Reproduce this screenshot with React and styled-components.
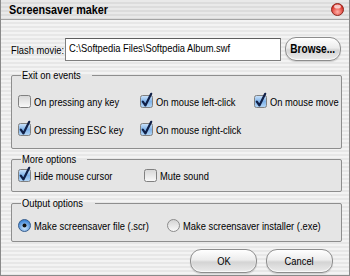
import React from "react";
import styled, { createGlobalStyle } from "styled-components";

const GlobalStyle = createGlobalStyle`
  body {
    margin: 0;
    font-family: "Liberation Sans", Arial, sans-serif;
    font-size: 11px;
    color: #000;
  }
`;

const Window = styled.div`
  width: 350px;
  height: 276px;
  box-sizing: border-box;
  border: 1px solid #8a8a8a;
  border-top: none;
  display: flex;
  flex-direction: column;
  background: repeating-linear-gradient(
    to bottom,
    #f3f3f3 0px,
    #f3f3f3 2px,
    #e7e7e7 2px,
    #e7e7e7 4px
  );
`;

// the dialog's font is a narrow one, squeeze Liberation Sans to match
const Txt = styled.span`
  display: inline-block;
  white-space: nowrap;
  transform: scaleX(${(p) => p.$sx || 0.85});
  transform-origin: ${(p) => (p.$center ? "center" : "left center")};
`;

const TitleBar = styled.div`
  height: 20px;
  box-sizing: border-box;
  border-bottom: 1px solid #a4a4a4;
  display: flex;
  align-items: center;
  justify-content: space-between;
  padding: 0 5px 0 8px;
  font-weight: bold;
  font-size: 12px;
  background: repeating-linear-gradient(
    to bottom,
    #e9e9e9 0px,
    #e9e9e9 2px,
    #dcdcdc 2px,
    #dcdcdc 4px
  );
`;

const Body = styled.div`
  padding: 17px 8px 0 9px;
  display: flex;
  flex-direction: column;
`;

const FlashRow = styled.div`
  display: flex;
  align-items: center;
  height: 24px;
`;

const Label = styled.span`
  width: 54px;
  padding: 2px 0 0 1px;
`;

const PathInput = styled.div`
  width: 218px;
  height: 23px;
  box-sizing: border-box;
  border: 1px solid #7f7f7f;
  border-top-color: #5e5e5e;
  background: #fff;
  padding: 3px 3px 0;
  overflow: hidden;
`;

const PillButton = styled.button`
  font-family: inherit;
  font-size: ${(p) => (p.$bold ? "12px" : "11px")};
  font-weight: ${(p) => (p.$bold ? "bold" : "normal")};
  width: ${(p) => p.$w}px;
  height: 24px;
  border: 1px solid #8d8d8d;
  border-radius: 11px;
  background: linear-gradient(to bottom, #ffffff 0%, #ececec 45%, #d4d4d4 55%, #ebebeb 100%);
  box-shadow: inset 0 -1px 1px rgba(255, 255, 255, 0.8), 0 1px 1px rgba(0, 0, 0, 0.15);
  padding: 0;
  color: #000;
  display: flex;
  align-items: center;
  justify-content: center;
  margin-left: ${(p) => p.$ml || 0}px;
`;

const Group = styled.fieldset`
  margin: ${(p) => p.$top}px 0 0 1px;
  width: 331px;
  box-sizing: border-box;
  border: 1px solid #8e8e8e;
  border-radius: 2px;
  background: #e5e5e5;
  padding: ${(p) => p.$pad};
  min-width: 0;
`;

const Legend = styled.legend`
  padding: 0 1px;
  margin-left: 3px;
  line-height: 13px;
`;

const OptionGrid = styled.div`
  display: grid;
  grid-template-columns: ${(p) => p.$cols};
  row-gap: ${(p) => p.$gap || 0}px;
`;

const Option = styled.div`
  display: flex;
  align-items: center;
  gap: 3px;
  height: 15px;
  white-space: nowrap;
`;

const Footer = styled.div`
  display: flex;
  justify-content: flex-end;
  gap: 9px;
  padding: ${(p) => p.$top}px 8px 0 0;
`;

const CheckBox = ({ on }) => (
  <svg width="13" height="13" viewBox="0 0 13 13" style={{ overflow: "visible", flex: "none" }}>
    <defs>
      <linearGradient id="cbOn" x1="0" y1="0" x2="0" y2="1">
        <stop offset="0" stopColor="#cfe4fa" />
        <stop offset="0.5" stopColor="#7fb3ea" />
        <stop offset="1" stopColor="#b7d8f7" />
      </linearGradient>
      <linearGradient id="cbOff" x1="0" y1="0" x2="0" y2="1">
        <stop offset="0" stopColor="#d6d6d6" />
        <stop offset="1" stopColor="#fafafa" />
      </linearGradient>
    </defs>
    <rect x="0.5" y="0.5" width="12" height="12" rx="2" fill={on ? "url(#cbOn)" : "url(#cbOff)"} stroke="#808080" />
    {on && (
      <path d="M2.8 6.6 L5.4 10.4 L11.2 -1.2" fill="none" stroke="#102048" strokeWidth="2.2" strokeLinecap="round" strokeLinejoin="round" />
    )}
  </svg>
);

const Radio = ({ on }) => (
  <svg width="13" height="13" viewBox="0 0 13 13" style={{ flex: "none" }}>
    <defs>
      <radialGradient id="rdOn" cx="0.5" cy="0.7" r="0.6">
        <stop offset="0" stopColor="#cfe6fb" />
        <stop offset="1" stopColor="#3f86d8" />
      </radialGradient>
      <linearGradient id="rdOff" x1="0" y1="0" x2="0" y2="1">
        <stop offset="0" stopColor="#d2d2d2" />
        <stop offset="1" stopColor="#fbfbfb" />
      </linearGradient>
    </defs>
    <circle cx="6.5" cy="6.5" r="6" fill={on ? "url(#rdOn)" : "url(#rdOff)"} stroke={on ? "#3a5f8c" : "#8a8a8a"} />
    {on && <circle cx="6.5" cy="6.5" r="2" fill="#111" />}
  </svg>
);

const CloseDot = () => (
  <svg width="13" height="13" viewBox="0 0 13 13">
    <defs>
      <radialGradient id="cls" cx="0.5" cy="0.7" r="0.6">
        <stop offset="0" stopColor="#ffb0a8" />
        <stop offset="1" stopColor="#d8261c" />
      </radialGradient>
    </defs>
    <circle cx="6.5" cy="6.5" r="6" fill="url(#cls)" stroke="#8c2a22" />
    <ellipse cx="6.5" cy="3.6" rx="3.4" ry="2" fill="#fff" opacity="0.7" />
  </svg>
);

export default function App() {
  return (
    <>
      <GlobalStyle />
      <Window>
        <TitleBar>
          <Txt $sx={0.9}>Screensaver maker</Txt>
          <CloseDot />
        </TitleBar>
        <Body>
          <FlashRow>
            <Label><Txt>Flash movie:</Txt></Label>
            <PathInput><Txt>C:\Softpedia Files\Softpedia Album.swf</Txt></PathInput>
            <PillButton $bold $w={57} $ml={4}><Txt $sx={0.84} $center>Browse...</Txt></PillButton>
          </FlashRow>

          <Group $top={8} $pad="12px 0 11px 6px">
            <Legend><Txt>Exit on events</Txt></Legend>
            <OptionGrid $cols="122px 114px auto" $gap={13}>
              <Option><CheckBox /><Txt>On pressing any key</Txt></Option>
              <Option><CheckBox on /><Txt>On mouse left-click</Txt></Option>
              <Option><CheckBox on /><Txt>On mouse move</Txt></Option>
              <Option><CheckBox on /><Txt>On pressing ESC key</Txt></Option>
              <Option><CheckBox on /><Txt>On mouse right-click</Txt></Option>
            </OptionGrid>
          </Group>

          <Group $top={4} $pad="2px 0 8px 6px">
            <Legend><Txt>More options</Txt></Legend>
            <OptionGrid $cols="126px auto">
              <Option><CheckBox on /><Txt>Hide mouse cursor</Txt></Option>
              <Option><CheckBox /><Txt>Mute sound</Txt></Option>
            </OptionGrid>
          </Group>

          <Group $top={5} $pad="8px 0 8px 6px">
            <Legend><Txt>Output options</Txt></Legend>
            <OptionGrid $cols="149px auto">
              <Option><Radio on /><Txt>Make screensaver file (.scr)</Txt></Option>
              <Option><Radio /><Txt>Make screensaver installer (.exe)</Txt></Option>
            </OptionGrid>
          </Group>

          <Footer $top={7}>
            <PillButton $w={67}><Txt $center>OK</Txt></PillButton>
            <PillButton $w={67}><Txt $center>Cancel</Txt></PillButton>
          </Footer>
        </Body>
      </Window>
    </>
  );
}
